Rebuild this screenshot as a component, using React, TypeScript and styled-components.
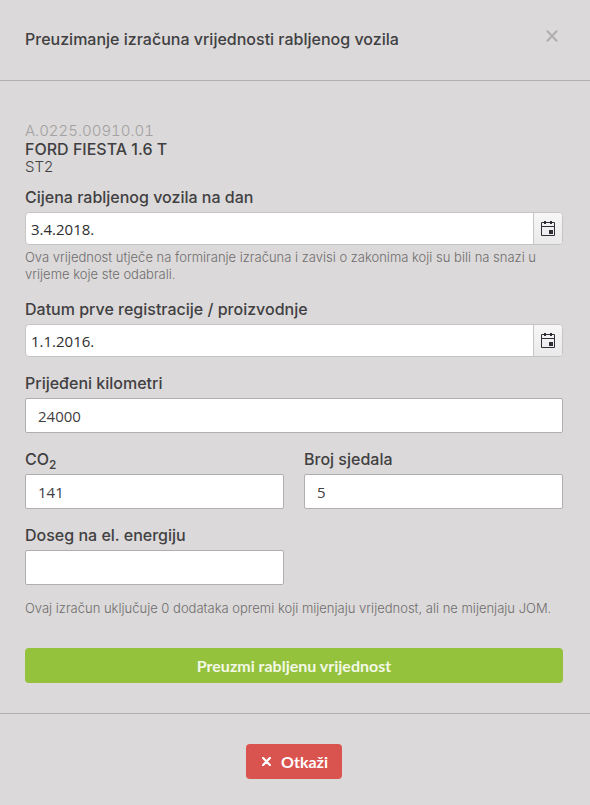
import React, { useId } from "react";
import styled, { createGlobalStyle } from "styled-components";

const GlobalStyle = createGlobalStyle`
  *, *::before, *::after { box-sizing: border-box; }
  body {
    margin: 0;
    background: #dbd9d9;
    color: #414042;
    font-family: Inter, "Noto Sans", sans-serif;
    font-size: 16px;
    line-height: 18px;
  }
  button, input { font: inherit; color: inherit; }
`;

const Dialog = styled.section`
  display: flex;
  flex-direction: column;
`;

const Header = styled.header`
  display: flex;
  justify-content: space-between;
  align-items: flex-start;
  padding: 30px 27px 32px 25px;
  border-bottom: 1px solid #b0aeae;
`;

const Title = styled.h1`
  margin: 0;
  font-size: 16px;
  line-height: 18px;
  font-weight: 500;
`;

const CloseButton = styled.button`
  display: flex;
  padding: 0 5px;
  border: 0;
  background: none;
  color: #b0aeae;
  cursor: pointer;
`;

const Form = styled.form`
  display: flex;
  flex-direction: column;
  padding: 41px 27px 30px 25px;
`;

const Vehicle = styled.div`
  display: flex;
  flex-direction: column;
  margin-bottom: 12px;
  font-size: 15px;
  font-weight: 300;
`;

const VehicleCode = styled.span`
  color: #a3a1a1;
  font-variant-numeric: tabular-nums;
`;

const VehicleName = styled.strong`
  font-size: 16px;
  font-weight: 500;
`;

const Fields = styled.div`
  display: grid;
  grid-template-columns: 1fr 1fr;
  column-gap: 20px;
  row-gap: 17px;
`;

const FieldBox = styled.div<{ $wide?: boolean }>`
  display: flex;
  flex-direction: column;
  grid-column: ${({ $wide }) => ($wide ? "1 / -1" : "auto")};
`;

const Label = styled.label`
  height: 18px;
  margin-bottom: 6px;
  font-weight: 500;

  sub {
    font-size: 12px;
    line-height: 0;
  }
`;

const TextInput = styled.input`
  width: 100%;
  height: 35px;
  padding: 0 12px;
  border: 1px solid #b0aeae;
  border-radius: 2px;
  background: #fff;
  font-family: "Open Sans", sans-serif;
  font-size: 15px;
`;

const DateControl = styled.div`
  display: flex;
  height: 33px;
  overflow: hidden;
  border: 1px solid #c5c5c5;
  border-radius: 4px;
  background: #fff;
`;

const DateInput = styled.input`
  flex: 1;
  min-width: 0;
  padding: 0 5px;
  border: 0;
  background: none;
  color: #2e2e2e;
  font-family: "Open Sans", sans-serif;
  font-size: 15px;
`;

const PickerButton = styled.button`
  display: flex;
  align-items: center;
  justify-content: center;
  width: 29px;
  padding: 0;
  border: 0;
  border-left: 1px solid #c5c5c5;
  background: linear-gradient(#f7f7f7, #e9e9e9);
  color: #2e2e36;
  cursor: pointer;
`;

const Hint = styled.p`
  margin: 4px 0 0;
  color: #6f6d6e;
  font-size: 13px;
  line-height: 17px;
  font-weight: 300;
`;

const Summary = styled(Hint)`
  margin: 15px 0 31px;
`;

const SubmitButton = styled.button`
  height: 35px;
  border: 0;
  border-radius: 4px;
  background: #95c23d;
  color: #f3f8e6;
  font-family: Lato, sans-serif;
  font-weight: 700;
  cursor: pointer;
`;

const Footer = styled.footer`
  display: flex;
  justify-content: center;
  padding: 30px 27px 26px 25px;
  border-top: 1px solid #b0aeae;
`;

const CancelButton = styled.button`
  display: flex;
  align-items: center;
  gap: 10px;
  height: 35px;
  padding: 0 14px 0 16px;
  border: 0;
  border-radius: 4px;
  background: #d9534f;
  color: #fff;
  font-family: Lato, sans-serif;
  font-weight: 700;
  cursor: pointer;
`;

const CrossIcon = ({ size, stroke }: { size: number; stroke: number }) => (
  <svg width={size} height={size} viewBox="0 0 12 12" aria-hidden="true">
    <path d="M1.5 1.2 10.5 10.8M10.5 1.2 1.5 10.8" fill="none" stroke="currentColor" strokeWidth={stroke} strokeLinecap="round" />
  </svg>
);

const CalendarIcon = () => (
  <svg width="16" height="16" viewBox="0 0 16 16" aria-hidden="true">
    <path d="M1.5 1.5h13v13h-13zM1 5.5h14" fill="none" stroke="currentColor" />
    <path d="M4 0h2v3h-2zM10 0h2v3h-2zM9 9h4v4h-4z" fill="currentColor" />
  </svg>
);

type FieldProps = {
  label: React.ReactNode;
  value: string;
  wide?: boolean;
};

const NumberField = ({ label, value, wide }: FieldProps) => {
  const id = useId();
  return (
    <FieldBox $wide={wide}>
      <Label htmlFor={id}>{label}</Label>
      <TextInput id={id} type="text" inputMode="numeric" defaultValue={value} />
    </FieldBox>
  );
};

const DateField = ({ label, value, hint }: FieldProps & { hint?: string }) => {
  const id = useId();
  return (
    <FieldBox $wide>
      <Label htmlFor={id}>{label}</Label>
      <DateControl>
        <DateInput id={id} type="text" defaultValue={value} />
        <PickerButton type="button" aria-label="Odaberi datum">
          <CalendarIcon />
        </PickerButton>
      </DateControl>
      {hint && <Hint>{hint}</Hint>}
    </FieldBox>
  );
};

export default function App() {
  return (
    <>
      <GlobalStyle />
      <Dialog role="dialog" aria-labelledby="dialog-title">
        <Header>
          <Title id="dialog-title">Preuzimanje izračuna vrijednosti rabljenog vozila</Title>
          <CloseButton type="button" aria-label="Zatvori">
            <CrossIcon size={12} stroke={2} />
          </CloseButton>
        </Header>
        <Form onSubmit={(event) => event.preventDefault()}>
          <Vehicle>
            <VehicleCode>A.0225.00910.01</VehicleCode>
            <VehicleName>FORD FIESTA 1.6 T</VehicleName>
            <span>ST2</span>
          </Vehicle>
          <Fields>
            <DateField
              label="Cijena rabljenog vozila na dan"
              value="3.4.2018."
              hint="Ova vrijednost utječe na formiranje izračuna i zavisi o zakonima koji su bili na snazi u vrijeme koje ste odabrali."
            />
            <DateField label="Datum prve registracije / proizvodnje" value="1.1.2016." />
            <NumberField label="Prijeđeni kilometri" value="24000" wide />
            <NumberField label={<>CO<sub>2</sub></>} value="141" />
            <NumberField label="Broj sjedala" value="5" />
            <NumberField label="Doseg na el. energiju" value="" />
          </Fields>
          <Summary>Ovaj izračun uključuje 0 dodataka opremi koji mijenjaju vrijednost, ali ne mijenjaju JOM.</Summary>
          <SubmitButton type="submit">Preuzmi rabljenu vrijednost</SubmitButton>
        </Form>
        <Footer>
          <CancelButton type="button">
            <CrossIcon size={9} stroke={3} />
            Otkaži
          </CancelButton>
        </Footer>
      </Dialog>
    </>
  );
}
